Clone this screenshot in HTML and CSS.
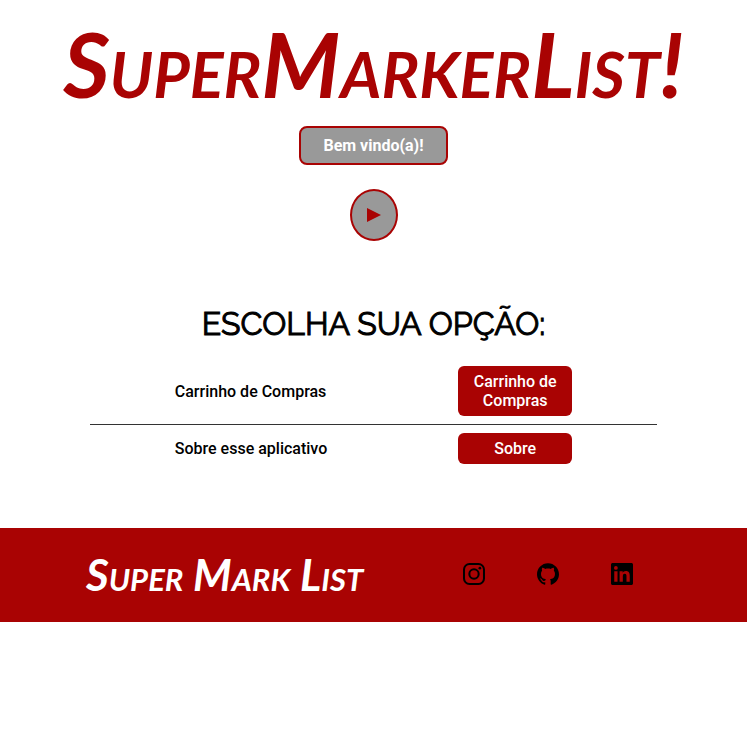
FILE: index.html
```html
<!DOCTYPE html>
<html lang="pt-BR">
<head>
  <meta charset="utf-8">
  <meta name="viewport" content="width=device-width, initial-scale=1">
  <title>SuperMarkerList!</title>
  <link rel="stylesheet" href="styles.css">
</head>
<body>
  <header class="header">
    <h1 class="brand">SuperMarkerList!</h1>
    <p class="welcome">Bem vindo(a)!</p>
    <button class="play" type="button" aria-label="Iniciar">
      <svg width="14" height="14" viewBox="0 0 14 14" aria-hidden="true"><path d="M0 0 14 7 0 14z" fill="currentColor"/></svg>
    </button>
  </header>
  <main class="options">
    <h2 class="options-title">ESCOLHA SUA OPÇÃO:</h2>
    <ul class="option-list">
      <li class="option">
        <span>Carrinho de Compras</span>
        <button class="option-button" type="button">Carrinho de Compras</button>
      </li>
      <li class="option">
        <span>Sobre esse aplicativo</span>
        <button class="option-button" type="button">Sobre</button>
      </li>
    </ul>
  </main>
  <footer class="footer">
    <p class="footer-brand">Super Mark List</p>
    <nav class="social" aria-label="Redes sociais">
      <a href="#" aria-label="Instagram">
        <svg viewBox="0 0 24 24" aria-hidden="true"><rect x="1.1" y="1.1" width="21.8" height="21.8" rx="6" fill="none" stroke="currentColor" stroke-width="2.2"/><circle cx="12" cy="12" r="5.1" fill="none" stroke="currentColor" stroke-width="2.2"/><circle cx="18.4" cy="5.6" r="1.45" fill="currentColor"/></svg>
      </a>
      <a href="#" aria-label="GitHub">
        <svg viewBox="0 0 24 24" aria-hidden="true"><path fill="currentColor" d="M12 .297c-6.63 0-12 5.373-12 12 0 5.303 3.438 9.8 8.205 11.385.6.113.82-.258.82-.577 0-.285-.01-1.04-.015-2.04-3.338.724-4.042-1.61-4.042-1.61C4.422 18.07 3.633 17.7 3.633 17.7c-1.087-.744.084-.729.084-.729 1.205.084 1.838 1.236 1.838 1.236 1.07 1.835 2.809 1.305 3.495.998.108-.776.417-1.305.76-1.605-2.665-.3-5.466-1.332-5.466-5.93 0-1.31.465-2.38 1.235-3.22-.135-.303-.54-1.523.105-3.176 0 0 1.005-.322 3.3 1.23.96-.267 1.98-.399 3-.405 1.02.006 2.04.138 3 .405 2.28-1.552 3.285-1.23 3.285-1.23.645 1.653.24 2.873.12 3.176.765.84 1.23 1.91 1.23 3.22 0 4.61-2.805 5.625-5.475 5.92.42.36.81 1.096.81 2.22 0 1.606-.015 2.896-.015 3.286 0 .315.21.69.825.57C20.565 22.092 24 17.592 24 12.297c0-6.627-5.373-12-12-12"/></svg>
      </a>
      <a href="#" aria-label="LinkedIn">
        <svg viewBox="0 0 24 24" aria-hidden="true"><path fill="currentColor" d="M20.447 20.452h-3.554v-5.569c0-1.328-.027-3.037-1.852-3.037-1.853 0-2.136 1.445-2.136 2.939v5.667H9.351V9h3.414v1.561h.046c.477-.9 1.637-1.85 3.37-1.85 3.601 0 4.267 2.37 4.267 5.455v6.286zM5.337 7.433a2.062 2.062 0 0 1-2.063-2.065 2.064 2.064 0 1 1 2.063 2.065zm1.782 13.019H3.555V9h3.564v11.452zM22.225 0H1.771C.792 0 0 .774 0 1.729v20.542C0 23.227.792 24 1.771 24h20.451C23.2 24 24 23.227 24 22.271V1.729C24 .774 23.2 0 22.222 0h.003z"/></svg>
      </a>
    </nav>
  </footer>
</body>
</html>
```
FILE: styles.css
```css
:root {
  --red: #a90303;
  --gray: #999999;
}

* {
  box-sizing: border-box;
  margin: 0;
  padding: 0;
}

body {
  background: #ffffff;
  color: #000000;
  font: 500 16px/19px Roboto, "Liberation Sans", sans-serif;
}

button {
  font: inherit;
  cursor: pointer;
}

.header {
  display: flex;
  flex-direction: column;
  align-items: center;
}

.brand,
.footer-brand {
  font-family: "Rock Salt", Lato, sans-serif;
  font-style: italic;
  font-variant-caps: small-caps;
  white-space: nowrap;
}

.brand {
  color: var(--red);
  font-size: 90px;
  font-weight: 700;
  line-height: 126px;
}

.welcome {
  width: 20%;
  padding: 8px;
  border: 2px solid var(--red);
  border-radius: 8px;
  background: var(--gray);
  color: #ffffff;
  font-weight: 700;
  text-align: center;
}

.play {
  display: grid;
  place-items: center;
  width: 48px;
  height: 52px;
  margin-top: 24px;
  border: 2px solid var(--red);
  border-radius: 50%;
  background: var(--gray);
  color: var(--red);
}

.options {
  width: 76%;
  margin: 64px auto;
}

.options-title {
  margin-bottom: 24px;
  font: 400 32px/37px Raleway, Lato, sans-serif;
  -webkit-text-stroke: 1px currentColor;
  text-align: center;
}

.option-list {
  list-style: none;
}

.option {
  display: flex;
  align-items: center;
  justify-content: space-between;
  padding: 0 15%;
}

.option + .option {
  margin-top: 8px;
  padding-top: 8px;
  border-top: 1px solid #333333;
}

.option-button {
  width: 114px;
  padding: 6px;
  border: 0;
  border-radius: 6px;
  background: var(--red);
  color: #ffffff;
}

.footer {
  display: flex;
  align-items: center;
  justify-content: space-between;
  padding: 23px 114px 25px 86px;
  background: var(--red);
}

.footer-brand {
  color: #ffffff;
  font-size: 44px;
  font-weight: 700;
  line-height: 46px;
}

.social {
  display: flex;
  gap: 52px;
}

.social a {
  color: #000000;
}

.social svg {
  display: block;
  width: 22px;
  height: 22px;
}
```
